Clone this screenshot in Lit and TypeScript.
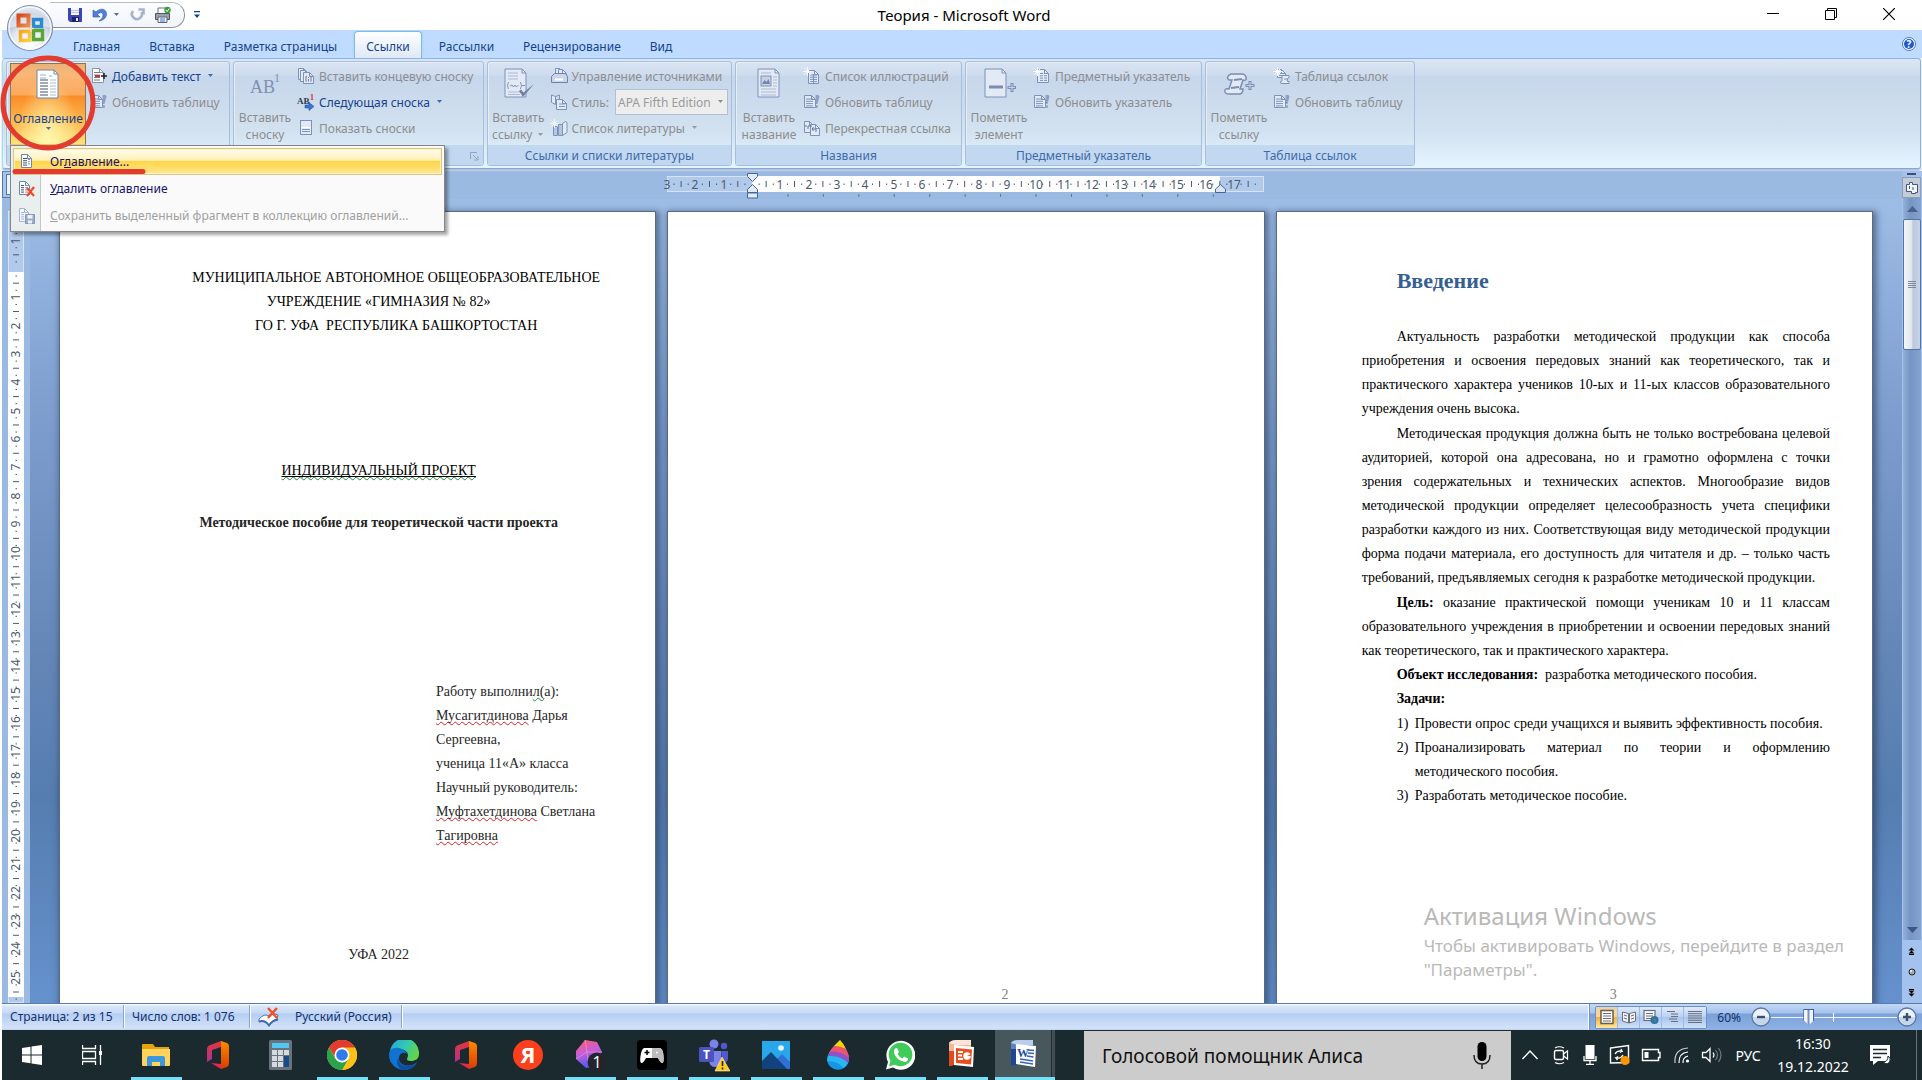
import { LitElement, html, css, svg, nothing, TemplateResult } from "lit";
import { customElement } from "lit/decorators.js";
import { classMap } from "lit/directives/class-map.js";

const icon = (w: number, h: number, body: unknown) =>
  html`<svg width=${w} height=${h} viewBox="0 0 ${w} ${h}" aria-hidden="true">${body}</svg>`;

/* ---------- shared small shapes ---------- */
const INK = "#7d92b8";
const SOFT = "#e3eaf6";

const sheet = (x: number, y: number, w: number, h: number, stroke = INK, fill = SOFT) => svg`
  <path d="M${x} ${y}h${w - 4}l4 4v${h - 4}h${-w}z" fill=${fill} stroke=${stroke}/>
  <path d="M${x + w - 4} ${y}v4h4" fill="none" stroke=${stroke}/>`;

const rows = (x: number, y: number, w: number, n: number, step: number, stroke = INK) =>
  svg`${Array.from({ length: n }, (_, i) => svg`<path d="M${x} ${y + i * step}h${w}" stroke=${stroke}/>`)}`;

const burst = svg`<path d="M4.5 0v9M0 4.5h9M1.5 1.5l6 6M7.5 1.5l-6 6" stroke="#f6f9ff" stroke-width="1"/>`;

/* ---------- quick access ---------- */
const orb = icon(50, 50, svg`
  <defs>
    <radialGradient id="orbBase" cx=".5" cy=".85" r=".95"><stop offset="0" stop-color="#fff"/><stop offset=".4" stop-color="#e3e9f2"/><stop offset=".7" stop-color="#a9b9d2"/><stop offset="1" stop-color="#f3f6fb"/></radialGradient>
    <linearGradient id="oR" x2="1" y2="1"><stop stop-color="#d9481a"/><stop offset="1" stop-color="#f08a4a"/></linearGradient>
    <linearGradient id="oY" x2="1" y2="1"><stop stop-color="#f7a51c"/><stop offset="1" stop-color="#fbd23c"/></linearGradient>
  </defs>
  <circle cx="25" cy="25" r="22.5" fill="url(#orbBase)" stroke="#7f8fae" stroke-width="1.2"/>
  <circle cx="25" cy="25" r="21" fill="none" stroke="#fff" stroke-width="1.5" opacity=".8"/>
  <path d="M4 25a21 21 0 0 1 42 0q-20-7-42 0z" fill="#fff" opacity=".45"/>
  <rect x="13.5" y="12.5" width="10" height="10" fill="none" stroke="url(#oR)" stroke-width="4"/>
  <rect x="28.5" y="16.5" width="8" height="7" fill="none" stroke="#2c8bd0" stroke-width="3.5"/>
  <rect x="15.5" y="28.5" width="9" height="9" fill="none" stroke="url(#oY)" stroke-width="3.5"/>
  <rect x="28.5" y="27.5" width="9" height="9" fill="none" stroke="#5aa636" stroke-width="3.5"/>
  <path d="M22 25.5h7M26 22v7" stroke="#f8d7b5" stroke-width="1.5"/>`);

const save = icon(16, 16, svg`
  <path d="M1 1h14v14H3l-2-2z" fill="#3f45b4"/><path d="M4 1h8v7H4z" fill="#f7f9ff"/>
  <path d="M4 3.5h8M4 5.5h8" stroke="#b8c1e6" stroke-width="1"/><path d="M5 10h7v5H5z" fill="#1f236f"/><path d="M9 11h2v3H9z" fill="#e6e9fa"/>`);
const undo = icon(16, 16, svg`<path d="M1 3v7h7l-2.500-2.500C8 5 11 5 11 8c0 3-2 4.500-4 6 4-.5 7.500-3 7.500-7C14.500 1.500 8 .5 4 5z" fill="#4f7fd6" stroke="#2f57a8" stroke-width=".6"/>`);
const redo = icon(16, 16, svg`<path d="M9.500 2.500h5v5M12.500 5A5 5 0 1 1 4 4" fill="none" stroke="#a6b3cb" stroke-width="2.600"/>`);
const printer = icon(18, 18, svg`
  <path d="M4 2h9v6H4z" fill="#fff" stroke="#6b7280"/><path d="M1.500 7.500h14v6h-14z" fill="#9aa1ad" stroke="#4b5563"/>
  <path d="M4 11h9v5.500H4z" fill="#eef3fb" stroke="#5c6676"/><path d="M6 13h5M6 15h5" stroke="#3d78c9"/>
  <circle cx="13.500" cy="4" r="3.200" fill="#3f9a3a"/><path d="M11.800 4l1.300 1.500 2.200-3" stroke="#fff" fill="none"/>`);

const caret = (c = "#4a6ea9") => icon(7, 4, svg`<path d="M1 0h5L3.500 3z" fill=${c}/>`);

/* ---------- ribbon icons ---------- */
const bigToc = icon(32, 32, svg`
  ${sheet(5, 2, 21, 28, "#6d87ab", "#fff")}
  ${rows(8, 7, 6, 2, 3, "#9bb0cc")}${rows(8, 12, 8, 6, 3, "#41526e")}
  ${rows(17, 8, 3, 1, 3, "#9bb0cc")}${rows(18, 12, 6, 6, 3, "#a7bbd6")}`);
const addText = icon(18, 18, svg`
  ${sheet(2.5, 1.5, 11, 14, "#8595ab", "#fff")}${rows(4, 5.5, 6, 4, 2.5, "#6a7c93")}
  <path d="M5 9h5" stroke="#e02b1d" stroke-width="2"/><path d="M11 9h6M14 6v6" stroke="#222" stroke-width="1.600"/>`);
const refresh = icon(18, 18, svg`
  ${sheet(1.5, 2.5, 11, 12)}${rows(3, 6, 7, 4, 2.3)}
  <path d="M12.500 2.500q3-2 4 1L14.500 11h-1.500z" fill="#8ea1c3"/><circle cx="13.500" cy="13.500" r="1.500" fill="#8ea1c3"/>`);
const bigAB = icon(32, 32, svg`<text x="1" y="26" font-family="Liberation Serif, serif" font-size="18" fill="#7f90b1">AB</text><text x="25" y="15" font-family="Liberation Serif, serif" font-size="12" fill="#7f90b1">1</text>`);
const endnote = icon(18, 18, svg`${sheet(1.5, 1.5, 9, 11)}${sheet(3.5, 3.5, 9, 11)}${sheet(6.5, 5.5, 10, 11)}
  <path d="M9.500 9H9v5.500h.5M13.500 9h.5v5.500h-.5M11.500 10v1M11.500 12v2.500" fill="none" stroke="#66799c"/>`);
const nextNote = icon(18, 18, svg`
  <text x="0" y="11" font-family="Liberation Serif, serif" font-size="9" font-weight="bold" fill="#2b3a55">AB</text>
  <text x="13" y="7" font-family="Liberation Serif, serif" font-size="8" font-weight="bold" fill="#e02b1d">1</text>
  <path d="M8 12h4V9.500l5 4-5 4V15H8z" fill="#3f74d6" stroke="#2451a3" stroke-width=".6"/>`);
const showNotes = icon(18, 18, svg`<rect x="3.500" y="1.500" width="11" height="14" fill=${SOFT} stroke=${INK}/><path d="M4 8.500h10" stroke="#fff"/>${rows(5, 10.5, 8, 2, 2)}`);
const bigCite = icon(32, 32, svg`
  ${sheet(3, 2, 21, 28)}${rows(6, 6, 10, 3, 3, "#a9b9d5")}
  <path d="M6.500 15q-2 4 0 7M18.500 15q2 4 0 7M8 19l2-1 1.500 2 1.500-2 1.500 2 2-2M20 18.500h3" fill="none" stroke="#8093b6"/>
  ${rows(6, 25, 12, 2, 2.5, "#a9b9d5")}<path d="M17 24l4 6 11-13-10.500 8.500-2.500-3z" fill="#6f82a8"/>`);
const sources = icon(18, 18, svg`
  ${sheet(5.5, 1.5, 8, 9)}${sheet(8.5, 2.5, 8, 9)}<path d="M1.500 9.500l3-3h11l2 3v6h-16z" fill="#cbd6ea" stroke="#6f82a8"/><path d="M5 12.500h8" stroke="#fff" stroke-width="2"/>`);
const styleIcon = icon(18, 18, svg`
  <path d="M1.500 2l4 1.500v8l-4-2z" fill=${SOFT} stroke=${INK}/><path d="M5.500 3.500l4-1.500v5" fill="none" stroke=${INK}/>
  ${sheet(6.5, 6.5, 10, 10)}${rows(9, 11, 6, 2, 2.5)}`);
const biblio = icon(18, 18, svg`
  <path d="M3.500 7.500h4v9h-4zM8.500 5.500h4v11h-4z" fill="#b6c5e0" stroke=${INK}/><path d="M12.500 4.500l3-2 1.500 1v10l-4.500 3z" fill=${SOFT} stroke=${INK}/>${burst}`);
const bigCaption = icon(32, 32, svg`
  ${sheet(5, 2, 21, 28)}${rows(8, 6, 10, 1, 3, "#a9b9d5")}
  <rect x="8" y="9" width="10" height="10" fill="#c5d1e7" stroke="#8093b6"/><path d="M9 17l2.500-4 2 2 2-3 1.500 5z" fill="#7387ad"/>
  ${rows(20, 10, 4, 4, 3, "#a9b9d5")}${rows(8, 22, 15, 3, 3, "#a9b9d5")}`);
const figures = icon(18, 18, svg`${sheet(5.5, 3.5, 10, 13)}${rows(7, 8, 7, 4, 2.2)}<path d="M10.500 7v9" stroke=${INK}/>${burst}`);
const crossRef = icon(18, 18, svg`${sheet(1.5, 2.5, 9, 11)}${sheet(7.5, 5.5, 9, 11)}
  <path d="M3 8v-2M5 10V7h4M13 13v-3H9M10.500 8L9 10l1.500 2" fill="none" stroke="#66799c"/>`);
const bigMark = icon(34, 32, svg`${sheet(3, 2, 21, 28)}<path d="M7 20h14" stroke="#7a8db2" stroke-width="3"/>
  <path d="M30 16v9M25.500 20.500h9" stroke="#7a8db2" stroke-width="3"/><path d="M30 17v7M26.500 20.500h6.500" stroke="#c6d3e8" stroke-width="1"/>`);
const bigScroll = icon(34, 32, svg`
  <path d="M7 8q-3 3 0 5h3L7 22q-5-1-4 3 1 2 3 2h12q3-1 3-5h-3l3-9q4 1 3-3-1-3-4-3H9z" fill=${SOFT} stroke="#7a8db2" stroke-width="1.500"/>
  <path d="M12 13l8-1M9 21l8-1" stroke="#7a8db2" stroke-width="2"/>
  <path d="M28 14v9M23.500 18.500h9" stroke="#7a8db2" stroke-width="3"/><path d="M28 15v7M24.500 18.500h7" stroke="#c6d3e8" stroke-width="1"/>`);
const indexIcon = icon(18, 18, svg`${sheet(4.5, 2.5, 11, 13)}${rows(7, 6.5, 3, 4, 2.3)}${rows(11, 6.5, 3, 4, 2.3)}${burst}`);
const authorities = icon(18, 18, svg`${sheet(4.5, 2.5, 8, 8)}${rows(6, 6.5, 5, 2, 2)}
  <path d="M9 8.500h7q1 2-1 2.500l-1 3q3 0 2 2.500H8q-2-2 1-2.500z" fill=${SOFT} stroke=${INK}/><path d="M11 12h3" stroke=${INK}/>${burst}`);

const menuToc = icon(18, 18, svg`${sheet(3.5, 1.5, 10, 13, "#6d87ab", "#fff")}${rows(5, 5.5, 4, 4, 2.2, "#41526e")}${rows(10, 6.5, 2, 3, 2.2, "#7d92b8")}`);
const menuDelete = icon(18, 18, svg`${sheet(1.5, 1.5, 10, 13, "#6d87ab", "#fff")}${rows(3, 5.5, 3, 4, 2.2, "#41526e")}${rows(7, 5.5, 3, 4, 2.2, "#7d92b8")}
  <path d="M9 8l7 8M16 7l-7 9" stroke="#ec4a2b" stroke-width="2.200"/>`);
const menuSave = icon(18, 18, svg`${sheet(1.5, 1.5, 9, 13, "#a3b4cf", "#f3f6fb")}${rows(3, 5.5, 3, 4, 2.2, "#a3b4cf")}
  <path d="M7.500 7.500h9v9h-9z" fill="#9daecb" stroke="#8497b9"/><path d="M9.500 8h5v3.500h-5z" fill="#edf2fa"/><path d="M10 13.500h4v3h-4z" fill="#edf2fa"/>`);

/* ---------- rulers ---------- */
const CM = 482 / 17;
const TICK = "#4c5a70";
const range = (a: number, b: number) => Array.from({ length: b - a + 1 }, (_, i) => a + i);

const hRuler = html`<svg class="hr-svg" width="100%" height="24" viewBox="0 0 597 24" preserveAspectRatio="xMinYMin" role="img" aria-label="Горизонтальная линейка">
  <rect x=".5" y=".5" width="596" height="15" fill="#b1c9ea" stroke="#d6e3f5"/>
  <rect x="85" y="0" width="468" height="16" fill="#fff"/>
  ${range(-3, 17).map((n) => svg`
    ${n === 0 ? nothing : svg`<text x=${Math.round(85 + n * CM)} y="12.500" class="num">${Math.abs(n)}</text>`}
    <path d="M${85 + (n + 0.5) * CM} 5v6" stroke=${TICK}/>
    ${[0.25, 0.75].map((q) => svg`<path d="M${85 + (n + q) * CM} 7.500v1.500" stroke=${TICK}/>`)}`)}
  ${range(1, 13).map((n) => svg`<path d="M${85.5 + n * 1.25 * CM} 18v3" stroke="#6b7684"/>`)}
  <path d="M80.500-2.500h10v3l-5 5-5-5z" fill="#e6eaf2" stroke="#3f67a5"/>
  <path d="M85.500 8.500l5 5v3h-10v-3zM80.500 17h10v5h-10z" fill="#e6eaf2" stroke="#3f67a5"/>
  <path d="M553.500 8.500l5 4.500v3.500h-10V13z" fill="#dbe3ef" stroke="#3f67a5"/>
</svg>`;

const vRuler = html`<svg class="vr-svg" width="16" height="792" viewBox="0 0 16 792" role="img" aria-label="Вертикальная линейка">
  <rect x=".5" y=".5" width="15" height="791" fill="#b1c9ea" stroke="#d6e3f5"/>
  <rect x="0" y="61" width="16" height="725" fill="#fff"/>
  ${range(-2, 25).map((n) => svg`
    ${n === 0 ? nothing : svg`<text transform="translate(12 ${Math.round(58 + n * CM)}) rotate(-90)" class="num">${Math.abs(n)}</text>`}
    <path d="M5 ${58 + (n + 0.5) * CM}h6" stroke=${TICK}/>
    ${[0.25, 0.75].map((q) => svg`<path d="M7.500 ${58 + (n + q) * CM}h1.500" stroke=${TICK}/>`)}`)}
</svg>`;

/* ---------- taskbar icons ---------- */
const office = icon(30, 30, svg`
  <defs><linearGradient id="ofA" y2="1" x2="0"><stop stop-color="#e2373b"/><stop offset="1" stop-color="#b0308f"/></linearGradient>
  <linearGradient id="ofB" y2="1" x2="0"><stop stop-color="#ff8a00"/><stop offset="1" stop-color="#d83b01"/></linearGradient></defs>
  <path d="M18 1L6 5.500Q4 6.500 4 9v13l5-3V10l9-3z" fill="url(#ofA)"/>
  <path d="M18 1l6 2q2 1 2 3v18q0 2-2 3l-6 2z" fill="url(#ofB)"/><path d="M8 23l10 6v-5z" fill="#e8274b"/>`);

const taskIcons: { label: string; art: TemplateResult; open?: boolean; active?: boolean }[] = [
  { label: "Проводник", open: true, art: icon(30, 30, svg`
    <path d="M1 5q0-1 1-1h10l2 3h14v7H1z" fill="#e5a50a"/><path d="M1 9h28v16q0 1-1 1H2q-1 0-1-1z" fill="#ffd35c"/>
    <path d="M6 26V18q0-2 2-2h14q2 0 2 2v8h-5v-4h-8v4z" fill="#3a96dd"/>`) },
  { label: "Office", art: office },
  { label: "Калькулятор", art: icon(30, 30, svg`
    <rect x="4" y="0" width="23" height="30" rx="1.500" fill="#69737d"/><rect x="7" y="3" width="17" height="5" fill="#4fc8f4"/>
    ${[0, 1, 2].map((r) => [0, 1, 2].map((c) => svg`<rect x=${7 + c * 6} y=${10 + r * 6} width="5" height="5" fill="#d5dae0"/>`))}
    <rect x="19" y="16" width="5" height="11" fill="#164a8c"/>`) },
  { label: "Chrome", open: true, art: icon(30, 30, svg`
    <circle cx="15" cy="15" r="15" fill="#fbc116"/>
    <path d="M15 7.500H28A15 15 0 0 1 15 30l6.500-11z" fill="#fbc116"/>
    <path d="M2 7.500A15 15 0 0 1 28 7.500H15v7L9 19z" fill="#e33b2e"/><path d="M2 7.500l6.500 11.500L15 22.500l6-3L15 30A15 15 0 0 1 2 7.500z" fill="#2ba24c"/>
    <circle cx="15" cy="15" r="7.500" fill="#fff"/><circle cx="15" cy="15" r="5.800" fill="#2f7bea"/>`) },
  { label: "Edge", open: true, art: icon(30, 30, svg`
    <defs><linearGradient id="edA" x2="1" y2=".4"><stop stop-color="#1fa5df"/><stop offset=".6" stop-color="#35c9b0"/><stop offset="1" stop-color="#62d34b"/></linearGradient></defs>
    <path d="M1 12A14.500 14.500 0 0 1 30 14c0 5-4 7-8 7-3 0-4-1-4-2 0-1 1-2 1-4C19 9 6 6 1 12z" fill="url(#edA)"/>
    <path d="M0 15C0 9 5 7 10 8c4 1 7 3 8 6-4-3-8 0-8 4 0 6 6 9 12 7 2 0 5-2 6-3-3 6-8 8-13 8A15 15 0 0 1 0 15z" fill="#1173cf"/>
    <path d="M10 18c-1 7 6 10 13 7 2 0 4-1 5-3-3 6-8 8-13 8C9 29 6 22 10 18z" fill="#0c4ea2"/>`) },
  { label: "Office", art: office },
  { label: "Яндекс", art: icon(30, 30, svg`<circle cx="15" cy="15" r="15" fill="#fc3f1d"/>
    <text x="15" y="23" text-anchor="middle" font-family="Open Sans, sans-serif" font-size="22" font-weight="bold" fill="#fff">Я</text>`) },
  { label: "Игры", open: true, art: icon(32, 34, svg`
    <defs><linearGradient id="crA" x2=".3" y2="1"><stop stop-color="#ff5a72"/><stop offset=".5" stop-color="#c85ed6"/><stop offset="1" stop-color="#4b5cf5"/></linearGradient></defs>
    <path d="M11 2l12 2 5 10-8 15-8 1L2 21V13z" fill="url(#crA)"/><path d="M11 2l2 12L2 21M13 14l15 0M13 14l2 15" fill="none" stroke="#ff9fb6" stroke-width=".8" opacity=".7"/>
    <circle cx="23" cy="24" r="9.500" fill="#24242c"/><text x="23" y="30" text-anchor="middle" font-family="Open Sans, sans-serif" font-size="16" fill="#fff">1</text>`) },
  { label: "Геймпад", open: true, art: icon(30, 30, svg`<rect width="30" height="30" rx="4" fill="#000"/>
    <path d="M7 8h16q3 1 3.500 8t-1 7q-2 0-4.500-5H9q-2.500 5-4.500 5t-1-7T7 8z" fill="#fff"/><path d="M15 8h8q3 1 3.500 8t-1 7q-2 0-4.500-5h-6z" fill="#bdbdbd"/>
    <path d="M10 10v5M7.500 12.500h5" stroke="#000" stroke-width="1.500"/><circle cx="20" cy="12.500" r="1" fill="#fff"/>`) },
  { label: "Teams", open: true, art: icon(32, 34, svg`
    <circle cx="16" cy="6" r="4.500" fill="#7b83eb"/><circle cx="26" cy="8" r="3.200" fill="#5059c9"/>
    <path d="M11 13h12v10q-1 6-6 6t-6-6z" fill="#7b83eb"/><path d="M23 13h7v8q-1 5-6 4z" fill="#5059c9"/>
    <rect x="1" y="9" width="15" height="15" rx="1.500" fill="#4b53bc"/><text x="8.500" y="21" text-anchor="middle" font-family="Open Sans, sans-serif" font-size="12" font-weight="bold" fill="#fff">T</text>
    <path d="M24 19l8 14H17z" fill="#ffcb1f" stroke="#fff3c4" stroke-width=".6"/><path d="M24.500 23v5M24.500 29.500v2" stroke="#222" stroke-width="1.600"/>`) },
  { label: "Фотографии", open: true, art: icon(30, 30, svg`<rect x="1" y="1" width="28" height="28" fill="#28a8ea"/>
    <path d="M15 20l6-6 8 8v7H15z" fill="#2f6fd6"/><path d="M1 21L10 12l16 17H1z" fill="#12437f"/><circle cx="20" cy="8" r="2.800" fill="#e9f7ff"/>`) },
  { label: "Paint", open: true, art: icon(30, 32, svg`
    <path d="M17 1q9 12 9 18.500A11 11 0 0 1 4 20Q4 13 17 1z" fill="#1796e8"/>
    <path d="M17 1q4 4 6 9-7-2-12-3z" fill="#fdd000"/><path d="M11 7q6 0 12 3 3 6 3 9Q20 13 6 14q2-4 5-7z" fill="#f0536e"/>
    <path d="M7 13q9-2 19 6 0 3-1 5-9-8-20-6z" fill="#9350c8"/><path d="M5 17q12-1 20 7-2 4-5 5Q16 22 4 22z" fill="#27b8f2"/>`) },
  { label: "WhatsApp", open: true, art: icon(30, 30, svg`
    <path d="M1 29.500l2-7.500A14.500 14.500 0 1 1 8 27.500z" fill="#fff"/><circle cx="15.500" cy="14.500" r="11.800" fill="#3ecb5a"/><path d="M4 26.500l1.500-6 4.500 4z" fill="#3ecb5a"/>
    <path d="M10 8.500l2-.5 2 4-1.500 2q2 3.500 5 4.500l1.500-2 4 2q0 3-3 3.500Q11 20 9 13q-.5-3 1-4.500z" fill="#fff"/>`) },
  { label: "PowerPoint", open: true, art: icon(32, 32, svg`
    <path d="M3 4q2-3 8-3h14v16L14 24 3 27z" fill="#f5b59a"/><path d="M3 4q2-3 8-3h14v5H10z" fill="#fbe5db"/><path d="M3 12h6v14l-6 1z" fill="#e24a1e"/>
    <path d="M8 6l20 2-1 20-19-2z" fill="#fff"/><path d="M10 9l16 1.500-1 15L10 24z" fill="#ea4e1b"/>
    <path d="M12 13h5M12 16.500h4M12 20h5" stroke="#fff" stroke-width="2"/><circle cx="21" cy="17" r="3.800" fill="#fff"/><path d="M21 17l4-2v2z" fill="#ea4e1b"/>`) },
  { label: "Word", open: true, active: true, art: icon(32, 32, svg`
    <path d="M3 4q2-3 8-3h14v16L14 24 3 27z" fill="#5d83c4"/><path d="M3 4q2-3 8-3h14v5H10z" fill="#b9cdee"/><path d="M3 10h6v16l-6 1z" fill="#1c4596"/>
    <path d="M8 5l20 2-1 21-19-3z" fill="#fff"/><path d="M20 11l6 .5M20 14l6 .5M19 17l6.500 1M12 20l13 2M12 23l13 2" stroke="#3563b5" stroke-width="1.500"/>
    <text x="9" y="18" font-family="Liberation Serif, serif" font-size="12" font-weight="bold" fill="#23509f">W</text>`) },
];

const trayIcons: { label: string; w: string; art: TemplateResult }[] = [
  { label: "Показать скрытые значки", w: "w32", art: icon(18, 18, svg`<path d="M1.500 13L9 5l7.500 8" fill="none" stroke="#fff" stroke-width="1.400"/>`) },
  { label: "Провести собрание", w: "w30", art: icon(18, 20, svg`<rect x="2.500" y="5.500" width="9" height="9" rx="1.500" fill="none" stroke="#fff" stroke-width="1.400"/><path d="M11.500 9l4-3v8l-4-3M3 3q4-2.500 9 0M3 17.500q4 2.500 9 0" fill="none" stroke="#fff" stroke-width="1.200"/>`) },
  { label: "Микрофон", w: "w28", art: icon(16, 20, svg`<rect x="3.500" y="0" width="9" height="14" fill="#fff"/><path d="M2 11v4.500h12V11M8 15v4M4 19.300h8" fill="none" stroke="#fff" stroke-width="1.300"/>`) },
  { label: "Обновление", w: "w32", art: icon(22, 22, svg`<path d="M1.500 4l18-2.500v17L1.500 19z" fill="none" stroke="#fff" stroke-width="1.400"/><path d="M6 10q2-4 7-3l-1-2M13 7l-2 1.500M14 11q-2 4-7 3l1.500 2M7 14l2-1.500" fill="none" stroke="#fff" stroke-width="1.300"/><circle cx="16" cy="16.500" r="4.500" fill="#ff9500"/>`) },
  { label: "Батарея", w: "w30", art: icon(20, 14, svg`<path d="M1.500 1.500h16v3h1.500v5h-1.500v3h-16z" fill="none" stroke="#fff" stroke-width="1.400"/><rect x="3.500" y="4" width="4" height="6" fill="#fff"/>`) },
  { label: "Сеть", w: "w32", art: icon(18, 18, svg`<circle cx="14.500" cy="15" r="1.600" fill="#fff"/><path d="M10 17q-.5-5.500 5-7M6 17q-.5-10 9-11" fill="none" stroke="#fff" stroke-width="1.200"/><path d="M2 17Q1 3 15 2" fill="none" stroke="#c4cbcd" stroke-width="1.200"/>`) },
  { label: "Громкость", w: "w28", art: icon(22, 18, svg`<path d="M1.500 6.500H5l4-4v13l-4-4H1.500z" fill="none" stroke="#fff" stroke-width="1.300"/><path d="M12 6.500q2 2.500 0 5" fill="none" stroke="#fff" stroke-width="1.200"/><path d="M14.500 4q4 5 0 10M17.500 2q5 7 0 14" fill="none" stroke="#6f7b80" stroke-width="1.200"/>`) },
];

const micBlack = icon(18, 28, svg`<rect x="4.500" y="0" width="9" height="19" rx="4.500" fill="#000"/><path d="M1 13q0 9 8 9t8-9M9 22v5" fill="none" stroke="#222" stroke-width="1.500"/>`);

/* ---------- ribbon data ---------- */
interface Small { label: string; art: TemplateResult; enabled?: boolean; arrow?: boolean }
interface Group { title: string; size: string; big: string[]; bigArt: TemplateResult; bigArrow?: boolean; small: (Small | "style")[]; launcher?: boolean }

const groups: Group[] = [
  { title: "Сноски", size: "b56", big: ["Вставить", "сноску"], bigArt: bigAB, launcher: true, small: [
    { label: "Вставить концевую сноску", art: endnote },
    { label: "Следующая сноска", art: nextNote, enabled: true, arrow: true },
    { label: "Показать сноски", art: showNotes } ] },
  { title: "Ссылки и списки литературы", size: "b56", big: ["Вставить", "ссылку"], bigArt: bigCite, bigArrow: true, small: [
    { label: "Управление источниками", art: sources }, "style",
    { label: "Список литературы", art: biblio, arrow: true } ] },
  { title: "Названия", size: "b60", big: ["Вставить", "название"], bigArt: bigCaption, small: [
    { label: "Список иллюстраций", art: figures },
    { label: "Обновить таблицу", art: refresh },
    { label: "Перекрестная ссылка", art: crossRef } ] },
  { title: "Предметный указатель", size: "b60", big: ["Пометить", "элемент"], bigArt: bigMark, small: [
    { label: "Предметный указатель", art: indexIcon },
    { label: "Обновить указатель", art: refresh } ] },
  { title: "Таблица ссылок", size: "b60", big: ["Пометить", "ссылку"], bigArt: bigScroll, small: [
    { label: "Таблица ссылок", art: authorities },
    { label: "Обновить таблицу", art: refresh } ] },
];

const tabs = ["Главная", "Вставка", "Разметка страницы", "Ссылки", "Рассылки", "Рецензирование", "Вид"];

/* ---------- document text, one entry per typeset line ---------- */
const intro = [
  ["Актуальность разработки методической продукции как способа",
    "приобретения и освоения передовых знаний как теоретического, так и",
    "практического характера учеников 10-ых и 11-ых классов образовательного",
    "учреждения очень высока."],
  ["Методическая продукция должна быть не только востребована целевой",
    "аудиторией, которой она адресована, но и грамотно оформлена с точки",
    "зрения содержательных и технических аспектов. Многообразие видов",
    "методической продукции определяет целесообразность учета специфики",
    "разработки каждого из них. Соответствующая виду методической продукции",
    "форма подачи материала, его доступность для читателя и др. – только часть",
    "требований, предъявляемых сегодня к разработке методической продукции."],
];
const tasks = [
  ["Провести опрос среди учащихся и выявить эффективность пособия."],
  ["Проанализировать материал по теории и оформлению", "методического пособия."],
  ["Разработать методическое пособие."],
];
const lines = (list: unknown[]) => list.map((l) => html`<span class="ln">${l}</span>`);

@customElement("app-root")
export class AppRoot extends LitElement {
  static styles = css`
    :host { display: block; --ui: "Noto Sans", "Open Sans", sans-serif; font-family: var(--ui); font-size: 12px; color: #15428b; }
    * { box-sizing: border-box; }
    button, input, select { font: inherit; color: inherit; margin: 0; padding: 0; border: 0; background: none; }
    button { display: flex; align-items: center; justify-content: center; white-space: nowrap; }
    svg { display: block; flex: none; }
    .window { display: flex; flex-direction: column; height: 100vh; padding-left: 2px; background: #fff; overflow: hidden; }

    .title { display: flex; height: 30px; flex: none; align-items: stretch; position: relative; background: #fff; }
    .orb { position: absolute; left: 3px; top: 3px; z-index: 3; }
    .qat { display: flex; align-items: center; height: 26px; margin: 2px 0 0 48px; padding: 0 12px 0 17px; gap: 9px; border: 1px solid #8a8f99; border-top-color: #b9bec8; border-left: 0; border-radius: 0 14px 14px 0; background: linear-gradient(#fbfcfe, #f1f5fb); }
    .qat .tight { margin-left: -4px; }
    .qat-more { width: 24px; margin-top: 2px; height: 26px; }
    .caption { flex: 1; font-size: 15px; line-height: 30px; text-align: center; color: #000; font-weight: 400; margin: 0; }
    .left-cluster, .right-cluster { flex: 0 0 234px; display: flex; }
    .right-cluster { justify-content: flex-end; flex-basis: 230px; padding-right: 4px; }
    .win { width: 58px; height: 28px; }

    .tabs { display: flex; height: 28px; flex: none; gap: 5px; padding: 0 6px 0 59px; background: #bfdbff; align-items: flex-end; }
    .tab { height: 27px; padding: 2px 11px 0; border: 1px solid transparent; border-bottom: 0; color: #15428b; }
    .tab.on { background: linear-gradient(#fff, #eaf1fa 60%, #dfe8f5); border-color: #8db2e3; border-radius: 4px 4px 0 0; box-shadow: 0 0 3px #7fe0f5; }
    .help { margin-left: auto; height: 28px; }

    .ribbon { flex: none; height: 111px; margin: 0 1px 2px 0; padding: 2px 3px; border: 1px solid #8db2e3; border-left-color: #a8dcea; border-bottom-color: #8aa8cf; border-radius: 3px; background: linear-gradient(#dbe6f4 0, #cfdced 16px, #c7d7ec 17px, #cbdaec 38px, #d3e2f0 72px, #e3f4ff 108px); display: grid; grid-template-columns: 224px 251px 245px 227px 237px 210px; gap: 3px; box-shadow: 0 2px 2px #a9bfdd; position: relative; z-index: 2; }
    .group { display: flex; flex-direction: column; border: 1px solid #a5bfdc; border-radius: 3px; box-shadow: inset 1px 1px 0 #e4edf8; height: 105px; min-width: 0; }
    .body { display: flex; flex: 1; padding: 1px 3px 0; align-items: flex-start; }
    .foot { height: 20px; display: flex; align-items: center; justify-content: center; padding-top: 1px; background: #c1d8f0; color: #3e6aaa; border-radius: 0 0 3px 3px; position: relative; }
    .launcher { position: absolute; right: 4px; }
    .big { flex-direction: column; justify-content: flex-start; height: 80px; padding-top: 4px; color: #8d8d8d; line-height: 17px; }
    .big svg { margin-bottom: 10px; }
    .big .line { display: flex; align-items: center; gap: 5px; }
    .big .line svg { margin: 0; }
    .b56 { width: 56px; } .b60 { width: 60px; }
    .toc-wrap { position: relative; }
    .toc { width: 76px; height: 82px; color: #15428b; border: 1px solid #8b7654; border-bottom-color: #f5c65b; background: radial-gradient(ellipse at 50% 100%, #fff9b0 0, rgba(255, 235, 130, 0) 60%), linear-gradient(#e8b27a 0, #f9b778 10px, #fda95a 31px, #f98c28 32px, #fdb64c 56px, #ffe27a 80px); }
    .col { display: flex; flex-direction: column; }
    .small { height: 26px; padding-left: 3px; gap: 3px; justify-content: flex-start; color: #8d8d8d; }
    .small.en { color: #15428b; }
    .small .ic { width: 20px; display: flex; justify-content: center; }
    .small .car { margin-left: 3px; }
    .style-row { display: flex; align-items: center; height: 26px; padding-left: 3px; gap: 3px; color: #8d8d8d; }
    .style-row .ic { width: 20px; display: flex; justify-content: center; }
    .combo { position: relative; display: flex; align-items: center; margin-left: 3px; }
    .combo select { appearance: none; width: 113px; height: 26px; border: 1px solid #aebfd6; background: #ededed; padding-left: 2px; color: #9a9a9a; opacity: 1; }
    .combo svg { position: absolute; right: 4px; pointer-events: none; }

    .menu { position: absolute; left: 0; top: 82px; z-index: 5; width: 435px; padding: 2px; border: 1px solid #868686; background: linear-gradient(90deg, #e9eeee 29px, #c5c5c5 29px, #c5c5c5 30px, #fafafa 30px); box-shadow: 3px 3px 3px rgba(0, 0, 0, 0.35); display: flex; flex-direction: column; }
    .menu button { height: 27px; justify-content: flex-start; color: #15156b; border: 1px solid transparent; }
    .menu .hot { border-color: #d9c58a; box-shadow: inset 0 0 0 1px #fff3c0; background: linear-gradient(#fffdf0, #fff0b4 45%, #ffd54a 50%, #ffdf70 80%, #ffeb9c); }
    .menu .dim { color: #a0a0a0; }
    .menu .ic { width: 26px; display: flex; justify-content: center; margin-right: 10px; }
    .mark { position: absolute; left: -10px; top: -8px; z-index: 6; pointer-events: none; }

    .work { flex: 1; min-height: 0; display: flex; }
    .main { flex: 1; min-width: 0; display: flex; flex-direction: column; }
    .num { font-size: 12px; fill: #4c5a70; text-anchor: middle; font-family: var(--ui); }
    .hruler { height: 28px; flex: none; display: grid; grid-template-columns: 1fr 1fr 1fr; gap: 11px; padding: 5px 29px 0 57px; background: #9bbae1; position: relative; }
    .hr-svg { grid-column: 2; overflow: visible; }
    .tabsel { position: absolute; left: 0; top: 0; width: 27px; height: 27px; border: 1px solid #4f79b8; background: #a9c4e8; }
    .tabsel::before { content: ""; width: 17px; height: 19px; border: 1px solid #4f79b8; background: #eef4fc; }
    .canvas { flex: 1; min-height: 0; display: flex; background: linear-gradient(#9ebde6 0, #8fb0dc 90px, #7b9ccc 230px, #6486b7 460px, #557db0 600px, #6591cd 804px); }
    .vruler { width: 28px; flex: none; padding: 12px 6px 0; background: #9bbae1; overflow: hidden; }
    .pages { flex: 1; min-width: 0; display: grid; grid-template-columns: 1fr 1fr 1fr; gap: 11px; padding: 12px 29px 0; overflow: hidden; }
    .page { background: #fff; border: 1px solid #5b6a80; border-bottom: 0; box-shadow: 2px 2px 6px 2px rgba(30, 50, 80, 0.5); font: 14px/24px "Liberation Serif", serif; color: #000; position: relative; min-width: 0; }
    .page p { margin: 0; }
    .p1 { padding: 54px 42px 0 84px; text-align: center; }
    .p1 .ind { text-indent: 35px; }
    .p1 .gap-a { margin-top: 121px; }
    .p1 .gap-b { margin-top: 28px; }
    .p1 .gap-c { margin-top: 95px; color: #262626; }
    .soft { color: #262626; }
    .author { margin: 145px 0 0 292px; text-align: left; color: #262626; white-space: nowrap; }
    .sp { text-decoration: underline wavy #e02020 1px; text-underline-offset: 1px; text-decoration-skip-ink: none; }
    .gr { text-decoration: underline wavy #1d8a3a 1px; text-underline-offset: 1px; text-decoration-skip-ink: none; }
    .ul { text-decoration: underline; }
    .folio { position: absolute; left: 0; right: 0; top: 771px; padding-left: 84px; padding-right: 6px; text-align: center; color: #7f7f7f; }
    .p3 { padding: 56px 42px 0 85px; text-align: justify; }
    .p3 h1 { margin: 0 0 31px 35px; font-size: 22px; line-height: 26px; color: #365f91; text-align: left; }
    .p3 .ln { display: block; text-align-last: justify; }
    .p3 .ln:last-child { text-align-last: left; }
    .p3 p .ln:first-child { text-indent: 35px; }
    .p3 p.s { margin-bottom: 1px; }
    .p3 ol { margin: 0; padding: 0 0 0 35px; list-style: none; }
    .p3 li { display: flex; }
    .p3 li b { font-weight: 400; flex: 0 0 18px; }
    .p3 li div { flex: 1; }
    .wm { position: absolute; left: 147px; top: 686px; font-family: var(--ui); color: #b9b9b9; font-size: 17px; line-height: 24px; text-align: left; white-space: nowrap; z-index: 4; }
    .wm strong { display: block; font-weight: 400; font-size: 24px; line-height: 36px; }

    .scroll { width: 20px; flex: none; display: flex; flex-direction: column; background: #a3c2ee; align-items: stretch; padding-right: 1px; }
    .split { height: 6px; padding: 2px 5px 2px; }
    .split i { display: block; height: 2px; background: #3e4f6e; }
    .rbtn { height: 21px; background: #c3cbd9; border: 1px solid #8f9db5; }
    .track { flex: 1; margin: 0 0 0 1px; background: linear-gradient(90deg, #94b0d8, #7695c4 40%, #85a3cf); display: flex; flex-direction: column; }
    .track button { height: 21px; flex: none; }
    .track .thumb { height: 131px; border: 1px solid #5673a5; border-radius: 2px; background: linear-gradient(90deg, #f4f6fa, #dfe5ee 50%, #b9c8dd 55%, #c9d5e6); }
    .track .down { margin-top: auto; height: 20px; }
    .nav { height: 21px; flex: none; }

    .status { flex: none; height: 27px; display: flex; border-top: 1px solid #567db0; background: linear-gradient(#fff 0, #d9e6f9 2px, #c6d9f5 9px, #b3cef3 10px, #d3e2f8 24px, #bed5f3 26px); color: #15316f; }
    .status .cell { display: flex; align-items: center; padding: 0 8px; border-right: 1px solid #8aa5cc; box-shadow: 1px 0 0 #fff; height: 23px; margin-top: 1px; }
    .status .c1 { min-width: 122px; }
    .status .c2 { min-width: 126px; }
    .status .lang { gap: 15px; min-width: 152px; }
    .st-right { margin-left: auto; display: flex; align-items: center; border-left: 1px solid #6f93c6; box-shadow: -1px 0 0 #fff; padding: 0 5px; background: linear-gradient(#c4d8f4 0, #a5c3ee 9px, #7ba1d8 10px, #8fb2e3 26px); }
    .views { display: flex; border: 1px solid #6a90c8; border-radius: 2px; height: 23px; }
    .views button { width: 22px; background: linear-gradient(#dfeafa, #bcd3f3 45%, #a9c6ee 50%, #cfe0f8); border-right: 1px solid #9dbbe6; }
    .views button:last-child { border: 0; }
    .views button.on { background: linear-gradient(#e8d3b0, #f9d993 45%, #f3b03d 50%, #ffe9a0); }
    .pct { padding: 0 10px; }
    .zoom { appearance: none; width: 126px; height: 22px; background: linear-gradient(#eef4fd, #eef4fd) 0 11px / 100% 1px no-repeat, linear-gradient(#fff, #fff) 62px 7px / 1px 9px no-repeat; outline: 0; }
    .zoom::-webkit-slider-thumb { appearance: none; width: 11px; height: 16px; background: linear-gradient(90deg, #3d6199 1px, #f2f6fc 1px, #f2f6fc 4px, #7793bf 5px, #7793bf 6px, #f2f6fc 7px, #f2f6fc 10px, #3d6199 10px); border-top: 1px solid #3d6199; clip-path: polygon(0 0, 100% 0, 100% 68%, 50% 100%, 0 68%); }

    .task { flex: none; height: 50px; display: flex; background: #1b2a2f; color: #fff; }
    .task > button { height: 50px; flex: none; }
    .start { width: 60px; } .tview { width: 60px; margin-right: 3px; }
    .app { width: 62px; position: relative; }
    .app.open::after { content: ""; position: absolute; left: 6px; right: 5px; bottom: 0; height: 3px; background: #76e0fb; }
    .app.active { background: linear-gradient(90deg, transparent 2px, #48575c 2px, #48575c 58px, #202e33 58px, #202e33 59px, #3f4d52 59px); }
    .app.active::after { left: 2px; right: 0; }
    .search { flex: 0 0 427px; display: flex; align-items: center; margin: 1px 0 0 29px; padding: 0 20px 0 18px; background: #ccc; color: #111; }
    .search input { flex: 1; min-width: 0; font-size: 19px; height: 49px; outline: 0; }
    .tray { flex: 1; min-width: 0; display: flex; align-items: center; padding-left: 3px; }
    .tray button { height: 50px; flex: none; }
    .w28 { width: 28px; } .w30 { width: 30px; } .w32 { width: 32px; }
    .lng { width: 44px; font-size: 14px; }
    .clock { width: 86px; flex-direction: column; font-size: 14px; line-height: 23px; }
    .note { width: 50px; }
    .edge { width: 1px; height: 50px; margin-left: auto; margin-right: 5px; background: #66757a; }
  `;

  private small(s: Small) {
    return html`<button class=${classMap({ small: true, en: !!s.enabled })} aria-disabled=${s.enabled ? "false" : "true"}>
      <span class="ic">${s.art}</span><span>${s.label}</span>${s.arrow ? html`<span class="car">${caret(s.enabled ? "#3e6aaa" : "#9a9a9a")}</span>` : nothing}
    </button>`;
  }

  private styleRow() {
    return html`<div class="style-row"><span class="ic">${styleIcon}</span><label for="cite">Стиль:</label>
      <span class="combo"><select id="cite" disabled><option>APA Fifth Edition</option></select>${caret("#8d8d8d")}</span></div>`;
  }

  private group(g: Group) {
    return html`<section class="group">
      <div class="body">
        <button class="big ${g.size}" aria-disabled="true">${g.bigArt}
          <span>${g.big[0]}</span><span class="line">${g.big[1]}${g.bigArrow ? caret("#9a9a9a") : nothing}</span>
        </button>
        <div class="col">${g.small.map((s) => (s === "style" ? this.styleRow() : this.small(s)))}</div>
      </div>
      <div class="foot">${g.launcher
        ? html`<span class="launcher">${icon(10, 10, svg`<path d="M1.500 8V1.500H8M9 5v4H5M4 4l4 4" fill="none" stroke="#8fa5c8"/>`)}</span>`
        : g.title}</div>
    </section>`;
  }

  private header() {
    return html`
      <header class="title">
        <button class="orb" aria-label="Кнопка Office">${orb}</button>
        <div class="left-cluster">
          <div class="qat">
            <button aria-label="Сохранить">${save}</button>
            <button aria-label="Отменить">${undo}</button>
            <button class="tight" aria-label="Список отмены">${caret()}</button>
            <button aria-label="Повторить">${redo}</button>
            <button aria-label="Быстрая печать">${printer}</button>
          </div>
          <button class="qat-more" aria-label="Настройка панели">${icon(8, 8, svg`<path d="M1 .5h6" stroke="#15428b" stroke-width="1.500"/><path d="M1 3.500h6L4 7z" fill="#15428b"/>`)}</button>
        </div>
        <h1 class="caption">Теория - Microsoft Word</h1>
        <div class="right-cluster">
          <button class="win" aria-label="Свернуть">${icon(12, 12, svg`<path d="M0 5.500h12" stroke="#000"/>`)}</button>
          <button class="win" aria-label="Восстановить">${icon(12, 12, svg`<path d="M.5 2.500h9v9h-9zM2.500 2V.5h9v9H10" fill="none" stroke="#000"/>`)}</button>
          <button class="win" aria-label="Закрыть">${icon(12, 12, svg`<path d="M0 0l12 12M12 0L0 12" stroke="#000" stroke-width="1.200"/>`)}</button>
        </div>
      </header>
      <nav class="tabs">
        ${tabs.map((t) => html`<button class=${classMap({ tab: true, on: t === "Ссылки" })}>${t}</button>`)}
        <button class="help" aria-label="Справка">${icon(14, 14, svg`<circle cx="7" cy="7" r="6.500" fill="#fff" stroke="#3e79c9"/><circle cx="7" cy="7" r="5" fill="#2159c9"/><text x="7" y="11" text-anchor="middle" font-family="Open Sans, sans-serif" font-size="10" font-weight="bold" fill="#fff">?</text>`)}</button>
      </nav>`;
  }

  private ribbon() {
    return html`<div class="ribbon">
      <section class="group">
        <div class="body">
          <div class="toc-wrap">
            <button class="big toc" aria-haspopup="menu" aria-expanded="true">${bigToc}<span>Оглавление</span><span class="line">${caret()}</span></button>
            <div class="menu" role="menu">
              <button class="hot" role="menuitem"><span class="ic">${menuToc}</span><span>Ог<u>л</u>авление...</span></button>
              <button role="menuitem"><span class="ic">${menuDelete}</span><span><u>У</u>далить оглавление</span></button>
              <button class="dim" role="menuitem" aria-disabled="true"><span class="ic">${menuSave}</span><span><u>С</u>охранить выделенный фрагмент в коллекцию оглавлений...</span></button>
            </div>
            <svg class="mark" width="150" height="122" viewBox="0 0 150 122" aria-hidden="true">
              <circle cx="48" cy="48" r="45" fill="none" stroke="#e33b30" stroke-width="5"/>
              <path d="M15 116.500h128" stroke="#e33b30" stroke-width="5" stroke-linecap="round"/>
            </svg>
          </div>
          <div class="col">
            ${this.small({ label: "Добавить текст", art: addText, enabled: true, arrow: true })}
            ${this.small({ label: "Обновить таблицу", art: refresh })}
          </div>
        </div>
        <div class="foot"></div>
      </section>
      ${groups.map((g) => this.group(g))}
    </div>`;
  }

  private pages() {
    return html`<main class="pages">
      <article class="page p1">
        <p class="ind">МУНИЦИПАЛЬНОЕ АВТОНОМНОЕ ОБЩЕОБРАЗОВАТЕЛЬНОЕ</p>
        <p>УЧРЕЖДЕНИЕ «ГИМНАЗИЯ № 82»</p>
        <p class="ind">ГО Г. УФА&nbsp; РЕСПУБЛИКА БАШКОРТОСТАН</p>
        <p class="gap-a"><span class="gr"><span class="ul">ИНДИВИДУАЛЬНЫЙ ПРОЕКТ</span></span></p>
        <p class="gap-b soft"><b>Методическое пособие для теоретической части проекта</b></p>
        <div class="author">
          <p>Работу выполни<span class="gr">л(</span>а):</p>
          <p><span class="sp">Мусагитдинова</span> Дарья</p>
          <p>Сергеевна,</p>
          <p>ученица 11«А» класса</p>
          <p>Научный руководитель:</p>
          <p><span class="sp">Муфтахетдинова</span> Светлана</p>
          <p><span class="sp">Тагировна</span></p>
        </div>
        <p class="gap-c">УФА 2022</p>
      </article>
      <article class="page"><div class="folio">2</div></article>
      <article class="page p3">
        <h1>Введение</h1>
        ${intro.map((p) => html`<p class="s">${lines(p)}</p>`)}
        <p>${lines([
          html`<b>Цель:</b> оказание практической помощи ученикам 10 и 11 классам`,
          "образовательного учреждения в приобретении и освоении передовых знаний",
          "как теоретического, так и практического характера.",
        ])}</p>
        <p>${lines([html`<b>Объект исследования:</b>&nbsp; разработка методического пособия.`])}</p>
        <p class="s">${lines([html`<b>Задачи:</b>`])}</p>
        <ol>${tasks.map((t, i) => html`<li><b>${i + 1})</b><div>${lines(t)}</div></li>`)}</ol>
        <div class="wm"><strong>Активация Windows</strong>Чтобы активировать Windows, перейдите в раздел<br>"Параметры".</div>
        <div class="folio">3</div>
      </article>
    </main>`;
  }

  private scrollbar() {
    return html`<div class="scroll">
      <div class="split"><i></i></div>
      <button class="rbtn" aria-label="Линейка">${icon(14, 14, svg`<path d="M1.500 3.500h3v-2h3v2h5v8h-2v1h-4v-2h-5z" fill="#f4f6fa" stroke="#41577d"/><path d="M4.500 5v3M8 6v3" stroke="#41577d"/>`)}</button>
      <div class="track">
        <button aria-label="Вверх">${icon(11, 6, svg`<path d="M0 6L5.500 0 11 6z" fill="#49618c"/>`)}</button>
        <button class="thumb" aria-label="Полоса прокрутки">${icon(8, 8, svg`<path d="M0 .5h8M0 2.500h8M0 4.500h8M0 6.500h8" stroke="#7c8797"/>`)}</button>
        <button class="down" aria-label="Вниз">${icon(11, 6, svg`<path d="M0 0h11L5.500 6z" fill="#3f5585"/>`)}</button>
      </div>
      <button class="nav" aria-label="Предыдущая страница">${icon(7, 8, svg`<path d="M.5 3.500L3.500.5l3 3zM.5 6.500l3-3 3 3z" fill="#000"/><path d="M1 7.500h5" stroke="#000"/>`)}</button>
      <button class="nav" aria-label="Объект перехода">${icon(8, 8, svg`<circle cx="4" cy="4" r="3" fill="#a9a9a9" stroke="#222"/><circle cx="3" cy="3" r="1" fill="#fff"/>`)}</button>
      <button class="nav" aria-label="Следующая страница">${icon(7, 8, svg`<path d="M1 .5h5" stroke="#000"/><path d="M.5 1.500l3 3 3-3zM.5 4.500l3 3 3-3z" fill="#000"/>`)}</button>
    </div>`;
  }

  private status() {
    const round = (d: string) => icon(20, 20, svg`<circle cx="10" cy="10" r="9" fill="#eef3fa" stroke="#5878a8" stroke-width="1.400"/><path d="M2 10a8 8 0 0 0 16 0z" fill="#c7d5e8"/><path d=${d} stroke="#3a4f73" stroke-width="2.400"/>`);
    const g = "#6b6f78";
    const bars = (x: number, y: number, w: number, n: number, s: number) => rows(x, y, w, n, s, g);
    return html`<footer class="status">
      <div class="cell c1">Страница: 2 из 15</div>
      <div class="cell c2">Число слов: 1 076</div>
      <div class="cell lang">${icon(22, 20, svg`<path d="M1 12q6-6 9-3 4-4 10-1l-1 4q-5 1-8 6-4-5-10-3z" fill="#fff" stroke="#5b6f9a"/><path d="M1 14.500q6-2 10 4 3-5 9-6" fill="none" stroke="#3f66b5" stroke-width="1.800"/><path d="M10 1l9 10M19 1l-9 10" stroke="#f0512d" stroke-width="2.400"/>`)}<span>Русский (Россия)</span></div>
      <div class="st-right">
        <div class="views">
          <button class="on" aria-label="Разметка страницы">${icon(14, 16, svg`<rect x="1" y="1.500" width="12" height="13" fill="#fff" stroke="#6b5d47" stroke-width="1.500"/>${bars(3, 4.5, 8, 4, 2.5)}`)}</button>
          <button aria-label="Режим чтения">${icon(14, 14, svg`<path d="M.5 2l6 1.500V13l-6-2zM13.500 2l-6 1.500V13l6-2z" fill="#eef1f7" stroke=${g}/><path d="M2 5l3 1M2 8l3 1M12 5l-3 1M12 8L9 9" stroke=${g}/>`)}</button>
          <button aria-label="Веб-документ">${icon(16, 16, svg`<rect x="1" y="1.500" width="11" height="10" fill="#f5f7fb" stroke=${g} stroke-width="1.200"/>${bars(3, 4.5, 7, 3, 2.5)}<circle cx="11.500" cy="11" r="4" fill="#2f6fae"/><path d="M10 9l3 1-1 4z" fill="#3f9a4a"/>`)}</button>
          <button aria-label="Структура">${icon(14, 14, svg`${bars(1, 1.5, 8, 1, 2)}${bars(5, 4, 7, 2, 2.5)}${bars(3, 9, 8, 1, 2)}${bars(5, 11.5, 7, 1, 2)}`)}</button>
          <button aria-label="Черновик">${icon(14, 14, svg`${rows(0, 1.5, 14, 6, 2.2, g)}`)}</button>
        </div>
        <span class="pct">60%</span>
        <button aria-label="Уменьшить">${round("M6 10h8")}</button>
        <input class="zoom" type="range" min="10" max="138" value="46" aria-label="Масштаб">
        <button aria-label="Увеличить">${round("M6 10h8M10 6v8")}</button>
      </div>
    </footer>`;
  }

  private taskbar() {
    return html`<div class="task">
      <button class="start" aria-label="Пуск">${icon(20, 20, svg`<path d="M0 3l8.500-1.200v7.700H0zM9.500 1.600L20 0v9.500H9.500zM0 10.500h8.500v7.700L0 17zM9.500 10.500H20V20L9.500 18.400z" fill="#fff"/>`)}</button>
      <button class="tview" aria-label="Представление задач">${icon(20, 20, svg`<path d="M.5 0v3.500h13V0M.5 20v-3.500h13V20M.5 6.500h13v7H.5zM18.500 0v20" fill="none" stroke="#fff" stroke-width="1.300"/><rect x="17" y="6" width="3" height="4" fill="#fff"/>`)}</button>
      ${taskIcons.map((t) => html`<button class=${classMap({ app: true, open: !!t.open, active: !!t.active })} aria-label=${t.label}>${t.art}</button>`)}
      <div class="search"><input type="text" value="Голосовой помощник Алиса" aria-label="Поиск"><button aria-label="Голосовой ввод">${micBlack}</button></div>
      <div class="tray">
        ${trayIcons.map((t) => html`<button class=${t.w} aria-label=${t.label}>${t.art}</button>`)}
        <button class="lng">РУС</button>
        <button class="clock"><span>16:30</span><span>19.12.2022</span></button>
        <button class="note" aria-label="Уведомления">${icon(22, 22, svg`<path d="M0 1h20v16H8l-5 4v-4H0z" fill="#fff"/><path d="M3 5.500h14M3 9.500h14M3 13.500h8" stroke="#1b2a2f" stroke-width="1.400"/><path d="M13 18q5 0 5-6 3 2 2 5-2 5-7 1z" fill="#fff" stroke="#1b2a2f"/>`)}</button>
        <span class="edge"></span>
      </div>
    </div>`;
  }

  render() {
    return html`<div class="window">
      ${this.header()}${this.ribbon()}
      <div class="work">
        <div class="main">
          <div class="hruler"><button class="tabsel" aria-label="Табуляция"></button>${hRuler}</div>
          <div class="canvas"><div class="vruler">${vRuler}</div>${this.pages()}</div>
        </div>
        ${this.scrollbar()}
      </div>
      ${this.status()}${this.taskbar()}
    </div>`;
  }
}
